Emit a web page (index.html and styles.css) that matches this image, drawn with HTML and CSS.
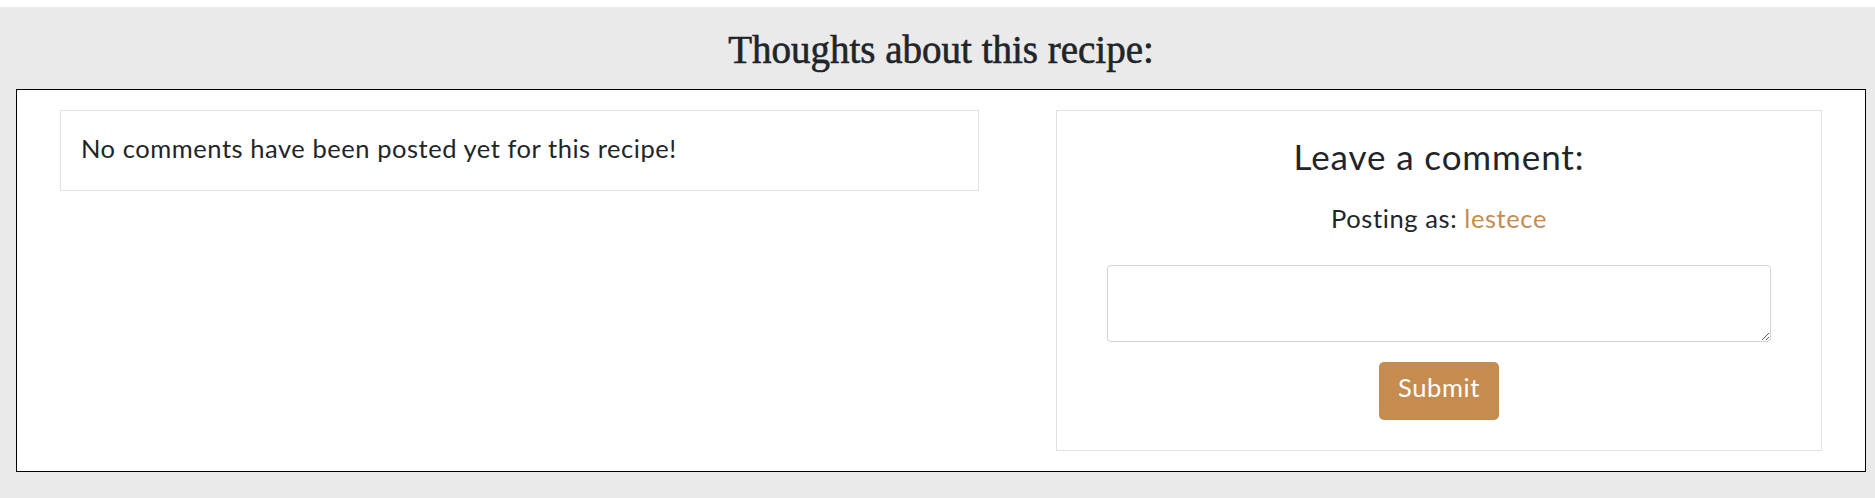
FILE: index.html
```html
<!DOCTYPE html>
<html lang="en">
<head>
<meta charset="utf-8">
<title>Comments</title>
<link rel="stylesheet" href="styles.css">
</head>
<body>
<section class="comments">
  <h2 class="comments-title">Thoughts about this recipe:</h2>
  <div class="comments-box">
    <div class="comment-list">
      <p class="empty-note">No comments have been posted yet for this recipe!</p>
    </div>
    <div class="comment-form">
      <h3 class="form-title">Leave a comment:</h3>
      <p class="posting-as">Posting as: <a class="user-link" href="#">lestece</a></p>
      <form class="form">
        <textarea class="comment-input"></textarea>
        <button class="submit-btn" type="button">Submit</button>
      </form>
    </div>
  </div>
</section>
</body>
</html>
```

FILE: styles.css
```css
body {
  margin: 0;
  background: #fff;
  color: #212529;
  font-family: Lato, "Open Sans", sans-serif;
}

.comments {
  margin-top: 7px;
  background: #eaeaea;
  padding: 19px 9px 26px 16px;
}

.comments-title {
  margin: 0 0 15px;
  text-align: center;
  font-family: "Liberation Serif", "Times New Roman", serif;
  font-weight: normal;
  font-size: 39px;
  line-height: 48px;
  color: #212529;
  -webkit-text-stroke: 0.6px #212529;
}

.comments-box {
  display: flex;
  align-items: flex-start;
  gap: 77px;
  padding: 20px 43px;
  border: 1px solid #000;
  background: #fff;
}

.comment-list {
  box-sizing: border-box;
  width: 919px;
  border: 1px solid #dee2e6;
  padding: 19px 20px 24px;
}

.empty-note {
  margin: 0;
  font-size: 25.5px;
  line-height: 36px;
  letter-spacing: 0.55px;
}

.comment-form {
  box-sizing: border-box;
  width: 766px;
  border: 1px solid #dee2e6;
  padding: 24px 50px 30px;
  text-align: center;
}

.form-title {
  margin: 0;
  font-weight: normal;
  font-size: 35px;
  line-height: 42px;
  letter-spacing: 0.9px;
}

.posting-as {
  margin: 23px 0 0;
  font-size: 25.5px;
  line-height: 36px;
  letter-spacing: 0.6px;
}

.user-link {
  color: #c68b4f;
  text-decoration: none;
}

.form {
  margin: 29px 0 0;
}

.comment-input {
  display: block;
  box-sizing: border-box;
  width: 664px;
  height: 77px;
  margin: 0;
  border: 1px solid #ced4da;
  border-radius: 4px;
  font: inherit;
  font-size: 16px;
  padding: 6px 12px;
  background: #fff;
}

.submit-btn {
  display: block;
  margin: 20px auto 0;
  padding: 7px 19px 15px;
  border: none;
  border-radius: 5px;
  background: #c68b4f;
  color: #fff;
  font-family: inherit;
  font-size: 25.5px;
  line-height: 36px;
  letter-spacing: 0.6px;
}
```
